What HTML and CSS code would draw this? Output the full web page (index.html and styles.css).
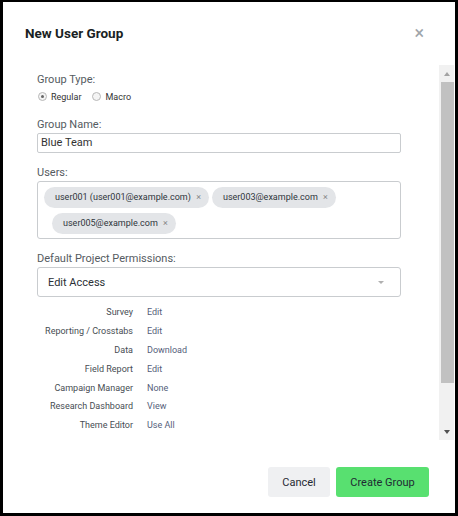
FILE: index.html
```html
<!DOCTYPE html>
<html lang="en">
<head>
    <meta charset="UTF-8">
    <title>New User Group</title>
    <link rel="stylesheet" href="styles.css">
</head>
<body>

<div class="modal">
    <!-- Header -->
    <div class="modal-header">
        <h2 class="modal-title">New User Group</h2>
        <span class="close-button">&times;</span>
    </div>

    <div class="modal-scroll">
        <div class="modal-body">
            <div class="field">
                <label class="field-label">Group Type:</label>
                <div class="radio-row">
                    <span class="radio checked"></span><span class="radio-text">Regular</span>
                    <span class="radio"></span><span class="radio-text">Macro</span>
                </div>
            </div>

            <div class="field">
                <label class="field-label">Group Name:</label>
                <div class="text-input">Blue Team</div>
            </div>

            <div class="field">
                <label class="field-label">Users:</label>
                <div class="chip-box">
                    <span class="chip">user001 (user001@example.com) <i>&times;</i></span>
                    <span class="chip">user003@example.com <i>&times;</i></span>
                    <span class="chip wrapped">user005@example.com <i>&times;</i></span>
                </div>
            </div>

            <div class="field">
                <label class="field-label">Default Project Permissions:</label>
                <div class="select-box">
                    <span>Edit Access</span>
                    <span class="caret"></span>
                </div>
            </div>

            <div class="perm-table">
                <div class="perm-row"><span class="perm-name">Survey</span><span class="perm-value">Edit</span></div>
                <div class="perm-row"><span class="perm-name">Reporting / Crosstabs</span><span class="perm-value">Edit</span></div>
                <div class="perm-row"><span class="perm-name">Data</span><span class="perm-value">Download</span></div>
                <div class="perm-row"><span class="perm-name">Field Report</span><span class="perm-value">Edit</span></div>
                <div class="perm-row"><span class="perm-name">Campaign Manager</span><span class="perm-value">None</span></div>
                <div class="perm-row"><span class="perm-name">Research Dashboard</span><span class="perm-value">View</span></div>
                <div class="perm-row"><span class="perm-name">Theme Editor</span><span class="perm-value">Use All</span></div>
            </div>
        </div>

        <div class="scrollbar">
            <div class="sb-button"><span class="arrow-up"></span></div>
            <div class="sb-track"><div class="sb-thumb"></div></div>
            <div class="sb-button"><span class="arrow-down"></span></div>
        </div>
    </div>

    <!-- Footer buttons -->
    <div class="modal-footer">
        <button class="btn btn-cancel">Cancel</button>
        <button class="btn btn-create">Create Group</button>
    </div>
</div>

</body>
</html>
```

FILE: styles.css
```css
/* Basic styling */
html, body {
    margin: 0;
    height: 100%;
}
body {
    background: #000;
    padding: 2px 3px 3px 3px;
    box-sizing: border-box;
    font-family: Roboto, "Liberation Sans", Arial, sans-serif;
}
.modal {
    background: #fff;
    height: 100%;
    display: flex;
    flex-direction: column;
}

/* Header */
.modal-header {
    height: 63px;
    flex: none;
    display: flex;
    align-items: center;
    justify-content: space-between;
    padding: 0 31px 2px 22px;
    box-sizing: border-box;
}
.modal-title {
    margin: 0;
    font-size: 13.5px;
    font-weight: bold;
    color: #1a1f24;
}
.close-button {
    font-size: 18px;
    color: #a0a5aa;
    line-height: 1;
}

/* Body */
.modal-scroll {
    height: 375px;
    flex: none;
    display: flex;
    margin-right: 1px;
}
.modal-body {
    flex: 1;
    overflow: hidden;
    padding: 8px 38px 0 34px;
}
.scrollbar {
    width: 15px;
    background: #f1f1f1;
    display: flex;
    flex-direction: column;
}
.sb-button {
    height: 17px;
    display: flex;
    align-items: center;
    justify-content: center;
    padding-left: 1px;
}
.arrow-up {
    border-left: 3.5px solid transparent;
    border-right: 3.5px solid transparent;
    border-bottom: 4px solid #a3a3a3;
}
.arrow-down {
    border-left: 3.5px solid transparent;
    border-right: 3.5px solid transparent;
    border-top: 4px solid #505050;
}
.sb-track {
    flex: 1;
}
.sb-thumb {
    height: 301px;
    margin-left: 2px;
    background: #c1c1c1;
}

.field {
    margin-bottom: 13px;
}
.field-label {
    display: block;
    font-size: 11px;
    line-height: 14px;
    color: #555b61;
    margin-bottom: 1px;
}
.radio-row {
    display: flex;
    align-items: center;
    height: 17px;
    margin-bottom: 2px;
    padding-left: 1px;
}
.radio {
    width: 7px;
    height: 7px;
    border: 1px solid #b8b8b8;
    border-radius: 50%;
    background: #f4f4f4;
    position: relative;
    margin-right: 4px;
}
.radio.checked::after {
    content: "";
    position: absolute;
    left: 2px;
    top: 2px;
    width: 3px;
    height: 3px;
    border-radius: 50%;
    background: #666;
}
.radio-text {
    font-size: 9px;
    color: #333;
    margin-right: 11px;
}
.text-input {
    border: 1px solid #c9cccf;
    border-radius: 2px;
    height: 20px;
    box-sizing: border-box;
    padding: 0 3px;
    font-size: 11px;
    line-height: 18px;
    color: #333;
}
.chip-box {
    border: 1px solid #c9cccf;
    border-radius: 3px;
    height: 58px;
    box-sizing: border-box;
    padding: 5px 6px;
    display: flex;
    flex-wrap: wrap;
    align-content: flex-start;
    gap: 5px 3px;
}
.chip {
    background: #e3e5e8;
    border-radius: 11px;
    height: 21px;
    line-height: 21px;
    padding: 0 8px 0 11px;
    font-size: 9px;
    color: #2f353b;
}
.chip i {
    font-style: normal;
    color: #888;
    margin-left: 3px;
}
.chip.wrapped {
    margin-left: 8px;
}
.select-box {
    border: 1px solid #c9cccf;
    border-radius: 3px;
    height: 30px;
    box-sizing: border-box;
    padding: 0 16px 0 10px;
    display: flex;
    align-items: center;
    justify-content: space-between;
    font-size: 11px;
    color: #2b3036;
    margin-bottom: -7px;
}
.caret {
    width: 0;
    height: 0;
    border-left: 3px solid transparent;
    border-right: 3px solid transparent;
    border-top: 3px solid #b0b0b0;
}

/* Permission list */
.perm-row {
    display: flex;
    align-items: center;
    height: 18.8px;
    font-size: 9px;
}
.perm-name {
    width: 96px;
    text-align: right;
    color: #474d53;
    margin-right: 14px;
}
.perm-value {
    color: #55607a;
}

/* Footer */
.modal-footer {
    flex: 1;
    display: flex;
    justify-content: flex-end;
    align-items: flex-start;
    gap: 6px;
    padding: 27px 26px 0 0;
}
.btn {
    height: 30px;
    border: none;
    border-radius: 3px;
    font-family: inherit;
    font-size: 11px;
    color: #1f2a33;
}
.btn-cancel {
    width: 62px;
    background: #eff0f2;
}
.btn-create {
    width: 93px;
    background: #58e070;
}
```
